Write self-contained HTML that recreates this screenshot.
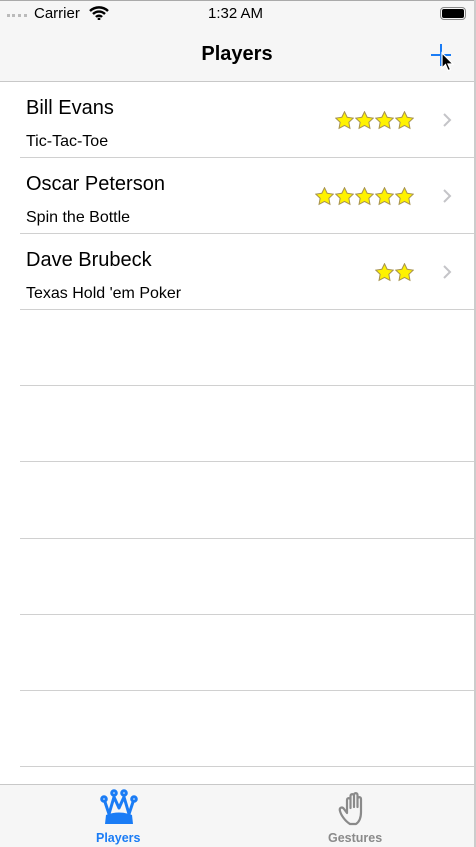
<!DOCTYPE html>
<html><head><style>
*{margin:0;padding:0;box-sizing:border-box}
body{width:476px;height:847px;background:#fff;font-family:"Liberation Sans",sans-serif;position:relative;overflow:hidden;border-right:2px solid #ccc}
.top{position:absolute;left:0;top:0;width:474px;height:82px;background:#f6f6f6;border-bottom:1px solid #c8c8c8;border-top:1px solid #aaa}
.t{position:absolute;font-size:15px;color:#000}
.row{position:absolute;left:0;width:474px;height:76px}
.sep{position:absolute;left:20px;right:0;height:1px;background:#d0d0d0}
.name{position:absolute;left:26px;top:15px;font-size:20px}
.game{position:absolute;left:26px;top:51px;font-size:16px}
.stars{position:absolute;right:60px;display:flex;gap:1px}
.chev{position:absolute;left:442px}
.tab{position:absolute;left:0;top:784px;width:474px;height:63px;background:#f6f6f6;border-top:1px solid #c8c8c8}
</style></head><body>
<div class="top">
<div style="position:absolute;left:7px;top:13px;width:20px;height:3px;border-top:3px dotted #bbb"></div>
<div class="t" style="left:34px;top:4px">Carrier</div>
<svg style="position:absolute;left:89px;top:5px" width="20" height="14" viewBox="0 0 20 14"><path d="M1 5a13 13 0 0 1 18 0M4 8a8.5 8.5 0 0 1 12 0M7 11a4 4 0 0 1 6 0" stroke="#000" stroke-width="2.4" fill="none"/><circle cx="10" cy="13" r="1.4"/></svg>
<div class="t" style="left:208px;top:4px">1:32 AM</div>
<div style="position:absolute;left:440px;top:6px;width:26px;height:13px;border:1px solid #888;border-radius:4px;padding:1px"><div style="background:#000;width:100%;height:100%;border-radius:2px"></div></div>
<div style="position:absolute;left:0;width:474px;top:42px;text-align:center;font-size:20px;font-weight:bold">Players</div>
<svg style="position:absolute;left:430px;top:43px" width="24" height="28" viewBox="0 0 24 28"><path d="M11 0v22M1 11h20" stroke="#1a7cf5" stroke-width="2"/><path d="M12 9v15l3.5-3.5 2.5 6 2.5-1-2.5-5.5h5z" fill="#000" stroke="#fff" stroke-width="1.2"/></svg>
</div>

<svg width="0" height="0" style="position:absolute"><defs><symbol id="s" viewBox="0 0 20 20"><path d="M10 0.8l2.8 5.8 6.4.9-4.6 4.4 1.1 6.3L10 15.2l-5.7 3 1.1-6.3L.8 7.5l6.4-.9z" fill="#fff200" stroke="#a89450" stroke-width="1.1"/></symbol><symbol id="c" viewBox="0 0 10 16"><path d="M2 2l6 6-6 6" stroke="#c4c4c8" stroke-width="2" fill="none"/></symbol></defs></svg>

<div class="row" style="top:82px"><div class="name">Bill Evans</div><div class="game">Tic-Tac-Toe</div>
<div class="stars" style="top:29px"><svg width="19" height="19"><use href="#s"/></svg><svg width="19" height="19"><use href="#s"/></svg><svg width="19" height="19"><use href="#s"/></svg><svg width="19" height="19"><use href="#s"/></svg></div>
<svg class="chev" style="top:30px" width="10" height="16"><use href="#c"/></svg><div class="sep" style="top:75px"></div></div>

<div class="row" style="top:158px"><div class="name">Oscar Peterson</div><div class="game">Spin the Bottle</div>
<div class="stars" style="top:29px"><svg width="19" height="19"><use href="#s"/></svg><svg width="19" height="19"><use href="#s"/></svg><svg width="19" height="19"><use href="#s"/></svg><svg width="19" height="19"><use href="#s"/></svg><svg width="19" height="19"><use href="#s"/></svg></div>
<svg class="chev" style="top:30px" width="10" height="16"><use href="#c"/></svg><div class="sep" style="top:75px"></div></div>

<div class="row" style="top:234px"><div class="name">Dave Brubeck</div><div class="game">Texas Hold 'em Poker</div>
<div class="stars" style="top:29px"><svg width="19" height="19"><use href="#s"/></svg><svg width="19" height="19"><use href="#s"/></svg></div>
<svg class="chev" style="top:30px" width="10" height="16"><use href="#c"/></svg><div class="sep" style="top:75px"></div></div>

<div class="sep" style="top:385px"></div><div class="sep" style="top:461px"></div><div class="sep" style="top:538px"></div><div class="sep" style="top:614px"></div><div class="sep" style="top:690px"></div><div class="sep" style="top:766px"></div>

<div class="tab">
<svg style="position:absolute;left:99px;top:4px" width="40" height="40" viewBox="0 0 40 40"><g stroke="#1a7cf5" stroke-width="3" fill="none" stroke-linejoin="round"><circle cx="5" cy="10" r="2.3"/><circle cx="15" cy="4" r="2.3"/><circle cx="25" cy="4" r="2.3"/><circle cx="35" cy="10" r="2.3"/><path d="M6 13l4 12 5-17 5 11 5-11 5 17 4-12"/></g><path d="M7 26q13-5 26 0l1 9H6z" fill="#1a7cf5"/></svg>
<div style="position:absolute;left:96px;top:46px;font-size:12.5px;color:#1a7cf5;font-weight:bold">Players</div>
<svg style="position:absolute;left:338px;top:6px" width="38" height="38" viewBox="0 0 38 38"><path d="M12 33C7 30 3 24 2 20c-1-3 2-5 4-2l3 4V9c0-2.5 3.5-2.5 3.5 0v8V5c0-2.5 3.5-2.5 3.5 0v11V4c0-2.5 3.5-2.5 3.5 0v12V8c0-2.5 3.5-2.5 3.5 0v13c0 6-2 10-5 12z" stroke="#8a8a8a" stroke-width="2.2" fill="none" stroke-linejoin="round"/></svg>
<div style="position:absolute;left:328px;top:46px;font-size:12.5px;color:#8a8a8a;font-weight:bold">Gestures</div>
</div>
</body></html>
